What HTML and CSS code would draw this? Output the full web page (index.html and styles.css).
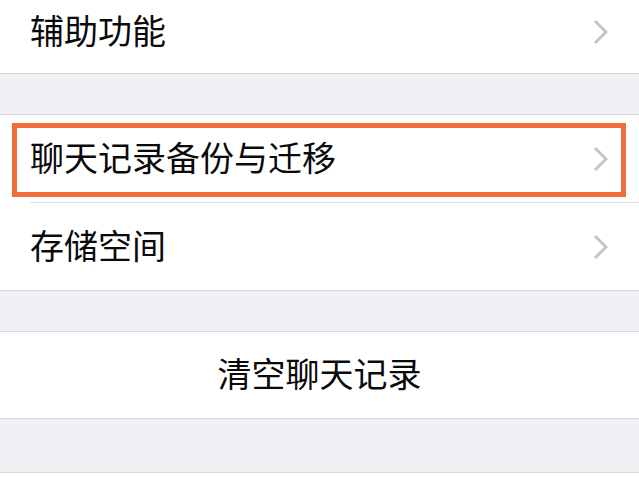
FILE: index.html
```html
<!DOCTYPE html>
<html lang="zh-CN">
<head>
    <meta charset="UTF-8">
    <meta name="viewport" content="width=device-width, initial-scale=1.0">
    <title>通用</title>
    <link rel="stylesheet" href="styles.css">
</head>
<body>
    <div class="group group-first">
        <div class="cell">
            <div class="cell-content">
                <span class="cell-label">辅助功能</span>
                <svg class="chevron" width="15" height="26" viewBox="0 0 15 26"><path d="M2 2 L13 13 L2 24"/></svg>
            </div>
        </div>
    </div>

    <div class="group">
        <div class="cell cell-tall">
            <div class="cell-content">
                <span class="cell-label">聊天记录备份与迁移</span>
                <svg class="chevron" width="15" height="26" viewBox="0 0 15 26"><path d="M2 2 L13 13 L2 24"/></svg>
            </div>
            <div class="highlight"></div>
        </div>
        <div class="cell cell-tall">
            <div class="cell-content">
                <span class="cell-label">存储空间</span>
                <svg class="chevron" width="15" height="26" viewBox="0 0 15 26"><path d="M2 2 L13 13 L2 24"/></svg>
            </div>
        </div>
    </div>

    <div class="group">
        <div class="cell cell-button">
            <span class="cell-label">清空聊天记录</span>
        </div>
    </div>

    <div class="group group-last">
        <div class="cell"></div>
    </div>
</body>
</html>
```

FILE: styles.css
```css
body {
    margin: 0;
    background-color: #efeff4;
    font-family: "Noto Sans CJK SC", "Noto Sans", sans-serif;
    color: #0a0a0a;
    overflow: hidden;
}

.group {
    background-color: #fff;
    border-top: 1px solid #d8d8dc;
    border-bottom: 1px solid #d8d8dc;
    margin-bottom: 40px;
}

.group-first {
    border-top: none;
}

.group-first .cell-content {
    padding-bottom: 9px;
}

.group-last {
    margin-top: 53px;
    border-bottom: none;
}

.cell {
    position: relative;
    padding-left: 30px;
    height: 73px;
}

.cell-content {
    display: flex;
    align-items: center;
    justify-content: space-between;
    height: 100%;
    padding-right: 31px;
    box-sizing: border-box;
}

.cell-tall {
    height: 88px;
}

.cell-tall .cell-content {
    border-bottom: 1px solid #dcdce0;
}

.cell-tall:last-child {
    height: 87px;
}

.cell-tall:last-child .cell-content {
    border-bottom: none;
}

.cell-label {
    font-size: 34px;
    line-height: 1;
    margin-bottom: 4px;
}

.chevron {
    display: block;
}

.chevron path {
    fill: none;
    stroke: #c4c4c9;
    stroke-width: 3;
}

.cell-button {
    display: flex;
    align-items: center;
    justify-content: center;
    padding-left: 0;
    height: 86px;
}

.highlight {
    position: absolute;
    left: 12px;
    top: 8px;
    width: 614px;
    height: 74px;
    border: 5px solid #ef6c3c;
    box-sizing: border-box;
}
```
